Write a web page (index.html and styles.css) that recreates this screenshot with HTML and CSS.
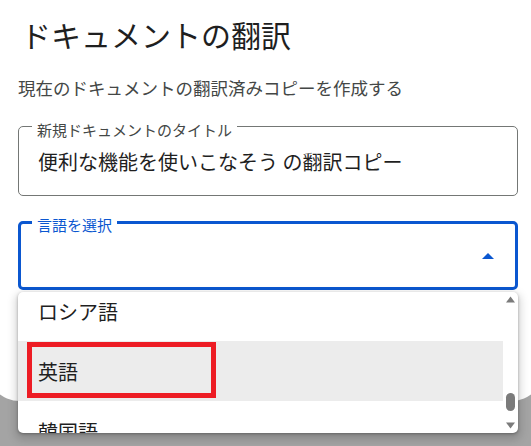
FILE: index.html
```html
<!DOCTYPE html>
<html lang="ja">
<head>
<meta charset="utf-8">
<title>ドキュメントの翻訳</title>
<link rel="stylesheet" href="styles.css">
</head>
<body>
<div class="dialog">
  <h1 class="title">ドキュメントの翻訳</h1>
  <p class="subtitle">現在のドキュメントの翻訳済みコピーを作成する</p>
  <div class="field">
    <span class="field-label">新規ドキュメントのタイトル</span>
    <span class="field-value">便利な機能を使いこなそう の翻訳コピー</span>
  </div>
  <div class="select-wrap">
    <div class="field field-select">
      <span class="field-label field-label-active">言語を選択</span>
      <svg class="caret" width="12" height="6" viewBox="0 0 12 6"><polygon points="0,6 6,0 12,6" fill="#0b57d0"/></svg>
    </div>
    <div class="menu">
      <ul class="menu-list">
        <li class="menu-item">ロシア語</li>
        <li class="menu-item menu-item-active">英語<span class="annot"></span></li>
        <li class="menu-item">韓国語</li>
      </ul>
      <div class="scrollbar">
        <svg class="sb-arrow" width="9" height="7" viewBox="0 0 9 7"><polygon points="4.5,0.5 9,6.5 0,6.5" fill="#7b7b7b"/></svg>
        <div class="sb-thumb" style="margin-top:90px"></div>
        <svg class="sb-arrow sb-arrow-down" width="9" height="7" viewBox="0 0 9 7"><polygon points="0,0.5 9,0.5 4.5,6.5" fill="#7b7b7b"/></svg>
      </div>
    </div>
  </div>
</div>
</body>
</html>
```
FILE: styles.css
```css
html, body {
  margin: 0;
  height: 446px;
  overflow: hidden;
}
body {
  background: #a4a4a4;
  font-family: "Noto Sans CJK JP", "Noto Sans", sans-serif;
}
.dialog {
  background: #fff;
  margin: 0 -14px;
  padding: 16px 27px 111px 32px;
  border-radius: 0 0 34px 34px;
}
.title {
  margin: 0 0 0 3px;
  font-size: 30px;
  font-weight: 400;
  line-height: 36px;
  color: #1f1f1f;
}
.subtitle {
  margin: 24px 0 0;
  font-size: 17.5px;
  line-height: 24px;
  color: #444746;
}
.field {
  position: relative;
  margin-top: 26px;
  height: 70px;
  box-sizing: border-box;
  border: 1px solid #747775;
  border-radius: 5px;
  display: flex;
  align-items: center;
  padding: 0 19px;
}
.field-label {
  position: absolute;
  left: 13px;
  top: -5px;
  padding: 0 5px;
  background: #fff;
  font-size: 15px;
  line-height: 15px;
  color: #444746;
  white-space: nowrap;
}
.field-value {
  font-size: 20px;
  color: #1f1f1f;
  white-space: nowrap;
}
.select-wrap {
  position: relative;
  margin-top: 25px;
}
.field-select {
  margin-top: 0;
  height: 69px;
  border: 3px solid #0b57d0;
  justify-content: flex-end;
  padding-right: 21px;
}
.field-label-active {
  left: 11px;
  top: -7px;
  color: #0b57d0;
}
.caret {
  display: block;
  margin-top: 1px;
}
.menu {
  position: absolute;
  left: 0;
  right: 0;
  top: calc(100% + 2px);
  height: 141px;
  background: #fff;
  border-radius: 5px;
  box-shadow: 0 1px 3px rgba(0,0,0,.3), 0 4px 8px 3px rgba(0,0,0,.15);
  display: flex;
  overflow: hidden;
}
.menu-list {
  flex: 1;
  margin: 0;
  padding: 0;
  list-style: none;
  overflow: hidden;
}
.menu-item {
  position: relative;
  height: 60px;
  display: flex;
  align-items: center;
  padding-left: 20px;
  font-size: 20px;
  color: #1f1f1f;
}
.menu-item:first-child {
  margin-top: -11px;
}
.menu-item-active {
  background: #ececec;
}
.annot {
  position: absolute;
  left: 9px;
  top: 1px;
  width: 189px;
  height: 56px;
  box-sizing: border-box;
  border: 5px solid #ed1c24;
}
.scrollbar {
  width: 15px;
  display: flex;
  flex-direction: column;
  align-items: center;
  padding-top: 4px;
}
.sb-arrow {
  display: block;
}
.sb-thumb {
  width: 9px;
  height: 18px;
  border-radius: 5px;
  background: #7b7b7b;
}
.sb-arrow-down {
  margin-top: 11px;
}
```
